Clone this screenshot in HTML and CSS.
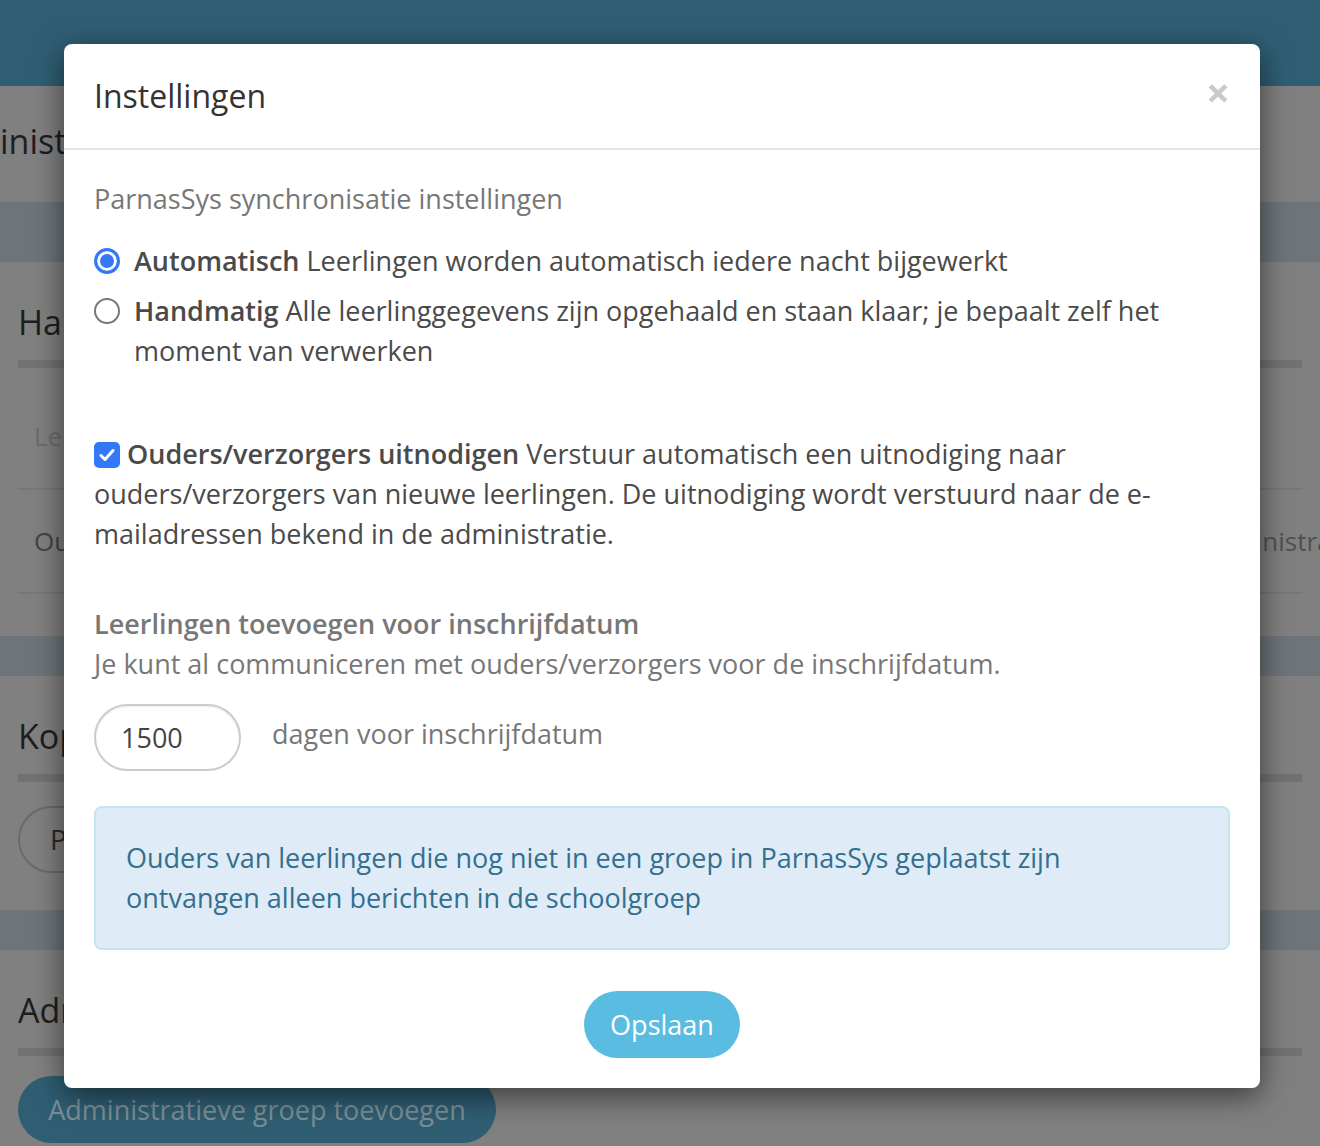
FILE: index.html
```html
<!DOCTYPE html>
<html lang="nl">
<head>
    <meta name="viewport" content="width=device-width, initial-scale=1.0">
    <link rel="stylesheet" href="styles.css">
    <title>Instellingen</title>
</head>

<body>
    <div class="page">
        <div class="topbar"></div>
        <div class="page-title">inistratie</div>
        <div class="band band-tall"></div>

        <div class="section section-one">
            <h2 class="section-heading">Handmatig koppelen</h2>
            <div class="row row-head"><span>Leerling</span></div>
            <div class="row row-body">
                <span>Ouders</span>
                <span class="row-right">inistratie</span>
            </div>
        </div>

        <div class="band"></div>

        <div class="section section-two">
            <h2 class="section-heading">Koppelingen</h2>
            <span class="outline-btn">ParnasSys</span>
        </div>

        <div class="band"></div>

        <div class="section section-three">
            <h2 class="section-heading">Administratieve groepen</h2>
            <span class="teal-btn">Administratieve groep toevoegen</span>
        </div>
    </div>

    <div class="modal">
        <div class="modal-header">
            <h4 class="modal-title">Instellingen</h4>
            <span class="close">&times;</span>
        </div>

        <div class="modal-body">
            <p class="muted">ParnasSys synchronisatie instellingen</p>

            <div class="radio radio-first">
                <span class="radio-dot checked"></span>
                <p><b>Automatisch</b> Leerlingen worden automatisch iedere nacht bijgewerkt</p>
            </div>
            <div class="radio">
                <span class="radio-dot"></span>
                <p><b>Handmatig</b> Alle leerlinggegevens zijn opgehaald en staan klaar; je bepaalt zelf het moment van verwerken</p>
            </div>

            <p class="invite">
                <span class="checkbox"><svg width="16" height="14" viewBox="0 0 16 14"><path d="M2 7.5 L6 11.5 L14 2.5" fill="none" stroke="#fff" stroke-width="3" stroke-linecap="round" stroke-linejoin="round"/></svg></span>
                <b>Ouders/verzorgers uitnodigen</b> Verstuur automatisch een uitnodiging naar ouders/verzorgers van nieuwe leerlingen. De uitnodiging wordt verstuurd naar de e-mailadressen bekend in de administratie.
            </p>

            <p class="muted early-title">Leerlingen toevoegen voor inschrijfdatum</p>
            <p class="muted">Je kunt al communiceren met ouders/verzorgers voor de inschrijfdatum.</p>

            <div class="days">
                <input class="days-input" type="text" value="1500">
                <span class="muted days-label">dagen voor inschrijfdatum</span>
            </div>

            <div class="alert">
                Ouders van leerlingen die nog niet in een groep in ParnasSys geplaatst zijn ontvangen alleen berichten in de schoolgroep
            </div>

            <div class="actions">
                <button class="save">Opslaan</button>
            </div>
        </div>
    </div>
</body>

</html>
```

FILE: styles.css
```css
body {
    font-family: "Open Sans", "Noto Sans", sans-serif;
    margin: 0;
    padding: 0;
    overflow: hidden;
}

p {
    margin: 0;
}

/* page behind the modal (already dimmed) */
.page {
    width: 1320px;
    height: 1146px;
    background-color: #808080;
    overflow: hidden;
}

.topbar {
    height: 86px;
    background-color: #2f5e73;
}

.page-title {
    height: 116px;
    line-height: 110px;
    font-size: 34px;
    color: #1e1e1e;
    white-space: nowrap;
}

.band {
    height: 40px;
    background-color: #6e7479;
}

.band-tall {
    height: 60px;
}

.section {
    padding: 0 18px;
}

.section-one {
    height: 374px;
}

.section-two {
    height: 234px;
}

.section-heading {
    margin: 0;
    font-weight: normal;
    font-size: 34px;
    color: #1e1e1e;
    line-height: 40px;
    padding-top: 40px;
    padding-bottom: 18px;
    border-bottom: 8px solid #727272;
}

.row {
    display: flex;
    justify-content: space-between;
    height: 102px;
    line-height: 102px;
    padding-left: 16px;
    font-size: 26px;
    border-bottom: 2px solid #777;
}

.row-head {
    height: 120px;
    line-height: 136px;
    color: #6c6c6c;
}

.row-body {
    color: #444;
}

.row-right {
    color: #505050;
    margin-right: -60px;
}

.outline-btn {
    display: inline-block;
    margin-top: 24px;
    height: 63px;
    line-height: 63px;
    padding: 0 30px;
    font-size: 28px;
    color: #2a2a2a;
    border: 2px solid #6a6a6a;
    border-radius: 34px;
}

.teal-btn {
    display: inline-block;
    margin-top: 20px;
    width: 478px;
    box-sizing: border-box;
    height: 67px;
    line-height: 67px;
    text-align: center;
    font-size: 27px;
    color: #7d8f96;
    background-color: #2f5e73;
    border-radius: 34px;
}

/* modal */
.modal {
    position: absolute;
    left: 64px;
    top: 44px;
    width: 1196px;
    height: 1044px;
    background-color: white;
    border-radius: 8px;
    box-shadow: 0 8px 30px rgba(0, 0, 0, 0.55);
    color: #4a4a4a;
    font-size: 27px;
    line-height: 40px;
}

.modal-header {
    display: flex;
    justify-content: space-between;
    align-items: center;
    height: 104px;
    padding: 0 30px;
    border-bottom: 2px solid #e5e5e5;
}

.modal-title {
    margin: 0;
    font-weight: normal;
    font-size: 32px;
    color: #333;
}

.close {
    font-size: 42px;
    font-weight: bold;
    color: #c9c9c9;
    margin-top: -8px;
}

.modal-body {
    padding: 29px 30px 0 30px;
}

.muted {
    color: #777;
}

b {
    font-weight: 600;
}

.radio {
    display: flex;
    align-items: flex-start;
    gap: 14px;
    margin-top: 10px;
}

.radio-first {
    margin-top: 22px;
}

.radio-dot {
    flex: none;
    width: 26px;
    height: 26px;
    margin-top: 7px;
    border: 2px solid #777;
    border-radius: 50%;
    box-sizing: border-box;
}

.radio-dot.checked {
    border: 3px solid #3478f6;
    background-color: #3478f6;
    box-shadow: inset 0 0 0 3px white;
}

.invite {
    margin-top: 63px;
}

.checkbox {
    display: inline-flex;
    align-items: center;
    justify-content: center;
    width: 26px;
    height: 26px;
    background-color: #3478f6;
    border-radius: 5px;
    vertical-align: 2px;
}

.early-title {
    margin-top: 50px;
    font-weight: 600;
}

.days {
    display: flex;
    align-items: center;
    gap: 31px;
    margin-top: 20px;
}

.days-label {
    margin-top: -8px;
}

.days-input {
    width: 147px;
    height: 67px;
    box-sizing: border-box;
    padding: 0 25px;
    border: 2px solid #ccc;
    border-radius: 34px;
    font-family: "Open Sans", "Noto Sans", sans-serif;
    font-size: 27px;
    color: #444;
    box-shadow: inset 0 1px 2px rgba(0, 0, 0, 0.08);
}

.alert {
    margin-top: 35px;
    padding: 30px 90px 30px 30px;
    background-color: #dfecf7;
    border: 2px solid #c2e6f0;
    border-radius: 8px;
    color: #336f8e;
}

.actions {
    display: flex;
    justify-content: center;
    margin-top: 41px;
}

.save {
    width: 156px;
    height: 67px;
    border: none;
    border-radius: 34px;
    background-color: #5bbce2;
    color: white;
    font-family: "Open Sans", "Noto Sans", sans-serif;
    font-size: 27px;
    cursor: pointer;
}
```
